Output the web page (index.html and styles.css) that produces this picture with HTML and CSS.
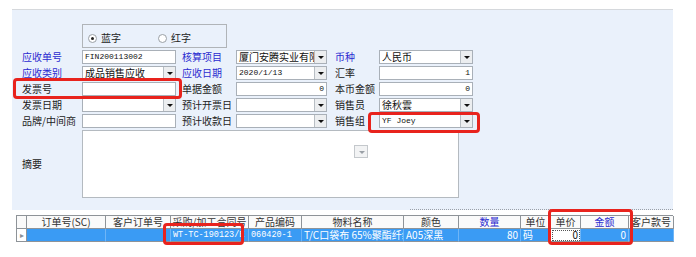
FILE: index.html
```html
<!DOCTYPE html>
<html>
<head>
<meta charset="utf-8">
<link rel="stylesheet" href="styles.css">
</head>
<body>
<div class="page">
  <div class="panel">
    <div class="radiobox">
      <span class="radio"><span class="dot on"></span>蓝字</span>
      <span class="radio"><span class="dot"></span>红字</span>
    </div>
    <div class="form">
      <span class="lbl blue">应收单号</span>
      <div class="fld"><span class="v mono">FIN200113002</span></div>
      <span class="lbl l2 blue">核算项目</span>
      <div class="fld"><span class="v">厦门安腾实业有限公司</span><i class="btn"></i></div>
      <span class="lbl l3 blue">币种</span>
      <div class="fld"><span class="v">人民币</span><i class="btn"></i></div>

      <span class="lbl blue">应收类别</span>
      <div class="fld"><span class="v">成品销售应收</span><i class="btn"></i></div>
      <span class="lbl l2 blue">应收日期</span>
      <div class="fld"><span class="v mono">2020/1/13</span><i class="btn"></i></div>
      <span class="lbl l3">汇率</span>
      <div class="fld"><span class="v mono num">1</span></div>

      <span class="lbl">发票号</span>
      <div class="fld"></div>
      <span class="lbl l2">单据金额</span>
      <div class="fld"><span class="v mono num">0</span></div>
      <span class="lbl l3">本币金额</span>
      <div class="fld"><span class="v mono num">0</span></div>

      <span class="lbl">发票日期</span>
      <div class="fld"><span class="v"></span><i class="btn"></i></div>
      <span class="lbl l2">预计开票日</span>
      <div class="fld"><span class="v"></span><i class="btn"></i></div>
      <span class="lbl l3">销售员</span>
      <div class="fld"><span class="v">徐秋雲</span><i class="btn"></i></div>

      <span class="lbl">品牌/中间商</span>
      <div class="fld"></div>
      <span class="lbl l2">预计收款日</span>
      <div class="fld"><span class="v"></span><i class="btn"></i></div>
      <span class="lbl l3">销售组</span>
      <div class="fld"><span class="v mono">YF Joey</span><i class="btn"></i></div>
    </div>
    <div class="memo-row">
      <span class="lbl memo-lbl">摘要</span>
      <div class="memo"><i class="btn mini"></i></div>
    </div>
  </div>

  <div class="grid">
    <div class="th rh"></div>
    <div class="th">订单号(SC)</div>
    <div class="th">客户订单号</div>
    <div class="th">采购/加工合同号</div>
    <div class="th">产品编码</div>
    <div class="th">物料名称</div>
    <div class="th">颜色</div>
    <div class="th hb">数量</div>
    <div class="th">单位</div>
    <div class="th">单价</div>
    <div class="th hb">金额</div>
    <div class="th">客户款号</div>

    <div class="td rh"><span class="arrow">&#9656;</span></div>
    <div class="td"></div>
    <div class="td"></div>
    <div class="td mono">WT-TC-190123/E</div>
    <div class="td mono">060420-1</div>
    <div class="td">T/C口袋布 65%聚酯纤维</div>
    <div class="td">A05深黑</div>
    <div class="td num">80</div>
    <div class="td">码</div>
    <div class="td num edit">0</div>
    <div class="td num">0</div>
    <div class="td"></div>
  </div>

  <div class="hl hl1"></div>
  <div class="hl hl2"></div>
  <div class="hl hl3"></div>
  <div class="hl hl4"></div>
</div>
</body>
</html>
```

FILE: styles.css
```css
* { box-sizing: border-box; }
html, body { margin: 0; padding: 0; background: #ffffff; }
body {
  font-family: "Noto Sans CJK SC", "Noto Sans", sans-serif;
  font-size: 10px;
  color: #222;
  width: 696px;
  height: 257px;
  overflow: hidden;
}
.page {
  position: relative;
  padding-top: 9px;
  height: 257px;
}
.panel {
  position: relative;
  margin-left: 12px;
  width: 661px;
  height: 201px;
  border-top: 1px solid #d5d8dc;
  background: #eaf1fb;
  padding-top: 14px;
}
.panel::after {
  content: "";
  position: absolute;
  left: 398px;
  right: 0;
  bottom: 0;
  border-top: 1px dotted #9aa0a8;
}
.radiobox {
  margin-left: 70px;
  width: 145px;
  height: 24px;
  border: 1px solid #b0b4b8;
  display: flex;
  align-items: flex-end;
  padding: 0 0 2px 5px;
  gap: 37px;
}
.radio {
  display: flex;
  align-items: center;
  gap: 4px;
  line-height: 14px;
  color: #222;
}
.dot {
  width: 9px;
  height: 9px;
  border-radius: 50%;
  border: 1px solid #9aa0a6;
  background: #fff;
  position: relative;
}
.dot.on::after {
  content: "";
  position: absolute;
  left: 2px;
  top: 2px;
  width: 3px;
  height: 3px;
  border-radius: 50%;
  background: #222;
}
.form {
  margin-top: 2px;
  padding-left: 10px;
  display: grid;
  grid-template-columns: 60px 94px 60px 91px 52px 94px;
  grid-auto-rows: 16px;
}
.lbl {
  line-height: 14px;
  height: 14px;
  white-space: nowrap;
  color: #222;
}
.lbl.blue { color: #2b2bd0; }
.lbl.l2 { padding-left: 6px; }
.lbl.l3 { padding-left: 8px; }
.fld {
  height: 14px;
  border: 1px solid #a9b0b8;
  background: #fff;
  display: flex;
  align-items: center;
  overflow: hidden;
}
.v {
  flex: 1;
  min-width: 0;
  white-space: nowrap;
  overflow: hidden;
  padding-left: 2px;
  line-height: 12px;
  color: #111;
}
.mono {
  font-family: "Liberation Mono", "DejaVu Sans Mono", monospace;
  font-size: 8px;
}
.v.num { text-align: right; padding-right: 2px; }
.btn {
  flex: none;
  width: 12px;
  height: 12px;
  border-left: 1px solid #b8bec4;
  background: #eceef0;
  position: relative;
}
.btn::after {
  content: "";
  position: absolute;
  left: 3px;
  top: 5px;
  border-left: 3px solid transparent;
  border-right: 3px solid transparent;
  border-top: 3px solid #111;
}
.memo-row {
  display: flex;
  padding-left: 10px;
}
.memo-lbl {
  width: 60px;
  height: 68px;
  line-height: 68px;
}
.memo {
  position: relative;
  width: 377px;
  height: 68px;
  border: 1px solid #b4bac0;
  background: #fff;
}
.btn.mini {
  position: absolute;
  left: 271px;
  top: 14px;
  width: 14px;
  height: 13px;
  border: 1px solid #c4c8cc;
  background: #f2f3f4;
}
.btn.mini::after {
  left: 4px;
  top: 5px;
  border-top-color: #9aa0a6;
}
.grid {
  margin: 5px 0 0 16px;
  width: 657px;
  display: grid;
  grid-template-columns: 10px 79px 65px 78px 53px 102px 55px 62px 30px 30px 48px 45px;
  grid-template-rows: 13px 13px;
  border-left: 1px solid #8e9398;
  border-top: 1px solid #8e9398;
}
.th, .td {
  border-right: 1px solid #8e9398;
  border-bottom: 1px solid #8e9398;
  line-height: 12px;
  white-space: nowrap;
  overflow: hidden;
}
.th {
  background: #fafafa;
  text-align: center;
  color: #333;
}
.th.hb { color: #2b2bd0; }
.td {
  background: #3a9bf4;
  color: #fff;
  padding-left: 2px;
  border-right-color: #6fb5f6;
}
.td.mono { font-size: 8.5px; }
.td.num { text-align: right; padding-right: 2px; }
.td.rh {
  background: #fff;
  border-right-color: #8e9398;
  padding: 0;
  text-align: center;
  color: #8a9096;
  font-size: 8px;
}
.td.edit {
  background: #fff;
  color: #111;
  outline: 1px dotted #555;
  outline-offset: -2px;
}
.hl {
  position: absolute;
  border: 3px solid #e8231d;
  border-radius: 4px;
}
.hl1 { left: 13px; top: 78px; width: 169px; height: 21px; }
.hl2 { left: 368px; top: 112px; width: 112px; height: 21px; }
.hl3 { left: 163px; top: 223px; width: 81px; height: 22px; }
.hl4 { left: 548px; top: 209px; width: 85px; height: 36px; }
```
